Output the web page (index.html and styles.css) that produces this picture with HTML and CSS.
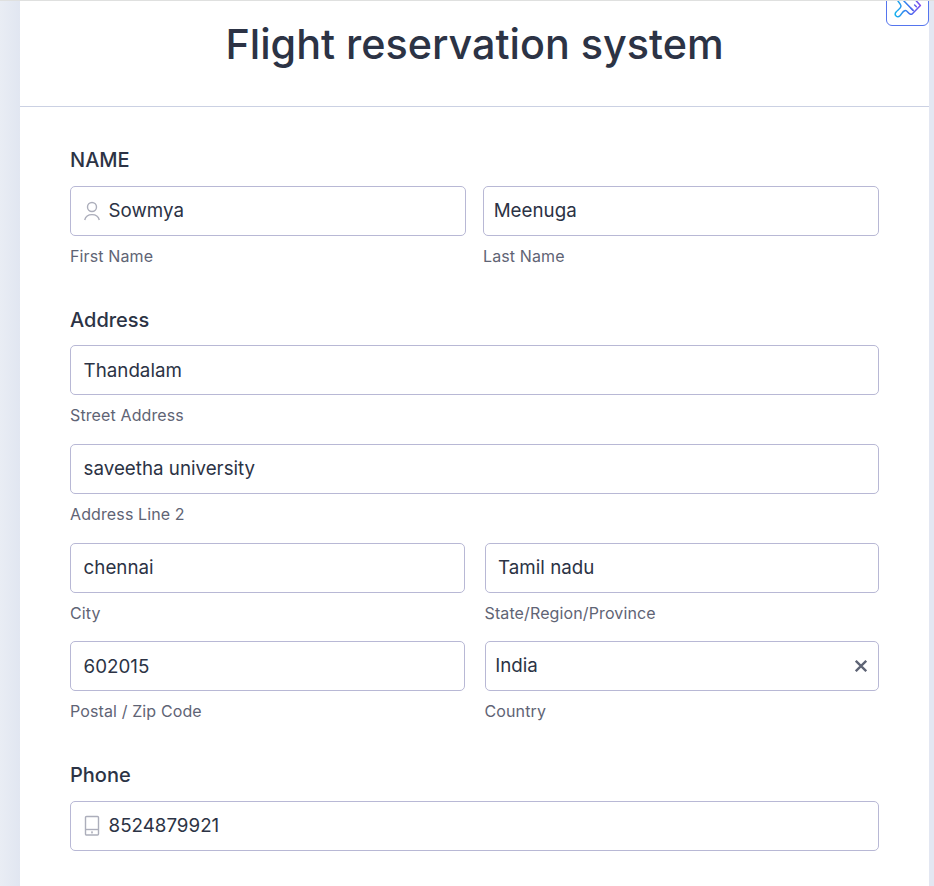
FILE: index.html
```html
<!DOCTYPE html>
<html lang="en">
<head>
<meta charset="utf-8">
<title>Flight reservation system</title>
<link rel="stylesheet" href="styles.css">
</head>
<body>
<main class="form">
  <header class="form-header"><h1><span>Flight reservation system</span></h1></header>
  <section class="group name">
    <h2><span>NAME</span></h2>
    <div class="row">
      <div class="field">
        <div class="input icon-input">
          <svg class="icon" width="18" height="22" viewBox="0 0 18 22" fill="none" stroke="#acaebb" stroke-width="1.4"><circle cx="9" cy="7" r="4.500"/><path d="M1.700 20C2.500 16.800 5 14.600 9 14.600s6.500 2.200 7.300 5.400"/></svg>
          <span>Sowmya</span>
        </div>
        <div class="hint"><span>First Name</span></div>
      </div>
      <div class="field">
        <div class="input tight"><span>Meenuga</span></div>
        <div class="hint"><span>Last Name</span></div>
      </div>
    </div>
  </section>
  <section class="group address">
    <h2><span>Address</span></h2>
    <div class="row"><div class="field"><div class="input"><span>Thandalam</span></div><div class="hint"><span>Street Address</span></div></div></div>
    <div class="row"><div class="field"><div class="input"><span>saveetha university</span></div><div class="hint"><span>Address Line 2</span></div></div></div>
    <div class="row">
      <div class="field"><div class="input"><span>chennai</span></div><div class="hint"><span>City</span></div></div>
      <div class="field"><div class="input"><span>Tamil nadu</span></div><div class="hint"><span>State/Region/Province</span></div></div>
    </div>
    <div class="row">
      <div class="field"><div class="input"><span>602015</span></div><div class="hint"><span>Postal / Zip Code</span></div></div>
      <div class="field">
        <div class="input tight select"><span>India</span>
          <svg class="clear" width="12" height="12" viewBox="0 0 12 12" fill="none" stroke="#5e6475" stroke-width="2.300"><path d="M.8.8l10.400 10.400M11.200.8L.8 11.200"/></svg>
        </div>
        <div class="hint"><span>Country</span></div>
      </div>
    </div>
  </section>
  <section class="group phone">
    <h2><span>Phone</span></h2>
    <div class="row"><div class="field">
      <div class="input icon-input">
        <svg class="icon" width="18" height="22" viewBox="0 0 18 22" fill="none" stroke="#acaebb" stroke-width="1.4"><rect x="2.500" y="1.500" width="13" height="18.500" rx="1"/><path d="M2.500 14.500h13"/><circle cx="9" cy="17.400" r=".35"/></svg>
        <span>8524879921</span>
      </div>
    </div></div>
  </section>
</main>
<div class="theme-button">
  <svg width="43" height="26" viewBox="0 0 43 26" fill="none" stroke="url(#brush)" stroke-width="1.500" stroke-linejoin="round" stroke-linecap="round">
    <defs><linearGradient id="brush" gradientUnits="userSpaceOnUse" x1="8" y1="0" x2="35" y2="0"><stop offset="0" stop-color="#16b8ed"/><stop offset=".55" stop-color="#3c72ee"/><stop offset="1" stop-color="#8449ed"/></linearGradient></defs>
    <path d="M11.500-1C12 1 15 3 15 5c0 2.500-3 3.800-4.900 6-2.500 3 1.200 6.400 3.900 3.700 1.600-1.600 2.500-4.700 5.200-5.200 2-.3 3 3.200 5.300 3.800.8.200 1.300 0 1.900-.6L34.400 4.500 29.500-1M16-2L27.200 9.500"/><path d="M25 7.300l1.800 1.800M28.600 4l1.800 1.800"/>
  </svg>
</div>
</body>
</html>
```
FILE: styles.css
```css
* { box-sizing: border-box; }
body {
  margin: 0;
  height: 886px;
  overflow: hidden;
  position: relative;
  padding: 0 5px 0 20px;
  border-top: 1px solid #dfe0df;
  background: linear-gradient(90deg, #e9edf4 0, #e1e6f1 20px, #e3e7f2 100%);
  font-family: Inter, "Liberation Sans", sans-serif;
  color: #2c3345;
}
.form { height: 885px; background: #fff; }
.form-header {
  height: 106px;
  padding-top: 18px;
  border-bottom: 1px solid #cbd1e3;
  text-align: center;
}
h1 { margin: 0; font-size: 41.300px; line-height: 50px; font-weight: 500; white-space: nowrap; }
.group { padding: 0 50px; }
.name { padding-top: 41px; height: 200.600px; }
.address { height: 455.500px; }
h2 { margin: 0; font-size: 20px; line-height: 24px; font-weight: 500; height: 37.800px; }
.row { display: flex; gap: 17px; height: 98.700px; }
.address .row { gap: 20px; }
.field { flex: 1 1 0; min-width: 0; }
.input {
  display: flex;
  align-items: center;
  height: 50px;
  padding: 0 12.600px;
  border: 1px solid #b8b8d5;
  border-radius: 5px;
  font-size: 18.750px;
  line-height: 24px;
}
.input span { position: relative; top: 0; }
.address .input span { top: .2px; }
.address .select span { top: -.5px; }
.tight { padding-left: 9.700px; }
.icon-input { padding-left: 12px; }
.icon { margin-right: 7.600px; }
.select { justify-content: space-between; padding-right: 11px; }
.hint { margin-top: 10px; font-size: 16px; line-height: 20px; letter-spacing: .12px; color: #5f6475; }
.theme-button {
  position: absolute;
  right: 5px;
  top: -4px;
  width: 43px;
  height: 29px;
  border: 1px solid #5575ee;
  border-radius: 0 0 6px 6px;
  background: #fff;
  overflow: hidden;
}
.theme-button svg { display: block; margin: 3px 0 0 -1px; }
```
